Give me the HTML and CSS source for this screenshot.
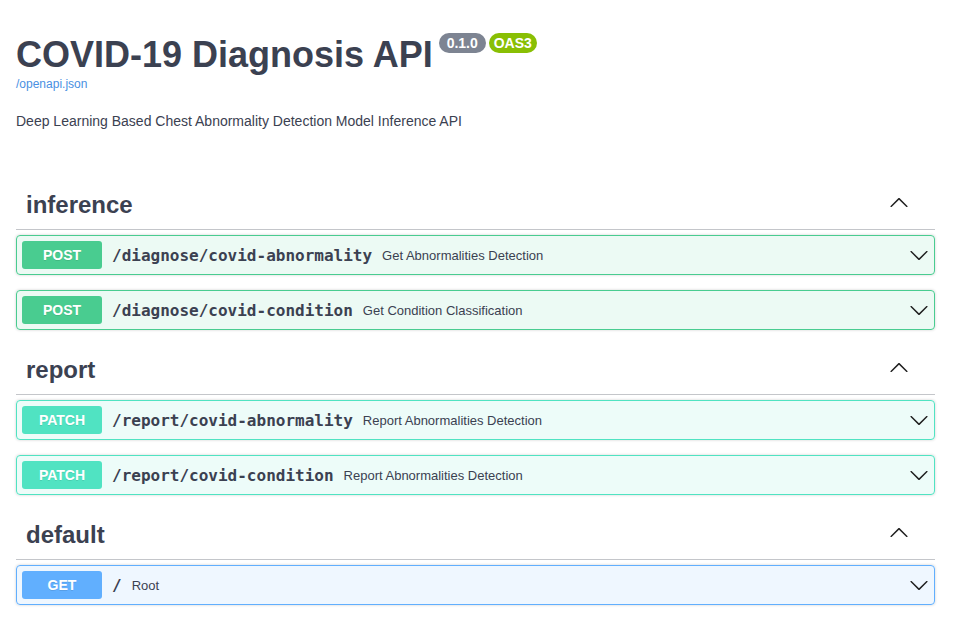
FILE: index.html
```html
<!DOCTYPE html>
<html lang="en">
<head>
<meta charset="utf-8">
<title>COVID-19 Diagnosis API</title>
<link rel="stylesheet" href="styles.css">
</head>
<body>
<div class="wrapper">
  <div class="info">
    <h2 class="title"><span>COVID-19 Diagnosis API</span><small class="badge badge-version"> 0.1.0 </small><small class="badge badge-oas">OAS3</small></h2>
    <a class="url" href="#">/openapi.json</a>
    <p class="description">Deep Learning Based Chest Abnormality Detection Model Inference API</p>
  </div>

  <section class="tag-section">
    <h3 class="tag"><span class="tag-name">inference</span>
      <svg class="arrow-up" width="20" height="20" viewBox="0 0 20 20"><path d="M17.418 13.891c.272.268.709.268.979 0s.271-.701 0-.969l-7.908-7.83c-.27-.268-.707-.268-.979 0l-7.908 7.83c-.27.268-.27.701 0 .969.271.268.709.268.979 0L10 6.75l7.418 7.141z"/></svg>
    </h3>
    <div class="opblock opblock-post">
      <span class="method">POST</span>
      <span class="path">/diagnose/covid-abnormality</span>
      <span class="desc">Get Abnormalities Detection</span>
      <svg class="arrow-down" width="20" height="20" viewBox="0 0 20 20"><path d="M17.418 6.109c.272-.268.709-.268.979 0s.271.701 0 .969l-7.908 7.83c-.27.268-.707.268-.979 0l-7.908-7.83c-.27-.268-.27-.701 0-.969.271-.268.709-.268.979 0L10 13.25l7.418-7.141z"/></svg>
    </div>
    <div class="opblock opblock-post">
      <span class="method">POST</span>
      <span class="path">/diagnose/covid-condition</span>
      <span class="desc">Get Condition Classification</span>
      <svg class="arrow-down" width="20" height="20" viewBox="0 0 20 20"><path d="M17.418 6.109c.272-.268.709-.268.979 0s.271.701 0 .969l-7.908 7.83c-.27.268-.707.268-.979 0l-7.908-7.83c-.27-.268-.27-.701 0-.969.271-.268.709-.268.979 0L10 13.25l7.418-7.141z"/></svg>
    </div>
  </section>

  <section class="tag-section">
    <h3 class="tag"><span class="tag-name">report</span>
      <svg class="arrow-up" width="20" height="20" viewBox="0 0 20 20"><path d="M17.418 13.891c.272.268.709.268.979 0s.271-.701 0-.969l-7.908-7.83c-.27-.268-.707-.268-.979 0l-7.908 7.83c-.27.268-.27.701 0 .969.271.268.709.268.979 0L10 6.75l7.418 7.141z"/></svg>
    </h3>
    <div class="opblock opblock-patch">
      <span class="method">PATCH</span>
      <span class="path">/report/covid-abnormality</span>
      <span class="desc">Report Abnormalities Detection</span>
      <svg class="arrow-down" width="20" height="20" viewBox="0 0 20 20"><path d="M17.418 6.109c.272-.268.709-.268.979 0s.271.701 0 .969l-7.908 7.83c-.27.268-.707.268-.979 0l-7.908-7.83c-.27-.268-.27-.701 0-.969.271-.268.709-.268.979 0L10 13.25l7.418-7.141z"/></svg>
    </div>
    <div class="opblock opblock-patch">
      <span class="method">PATCH</span>
      <span class="path">/report/covid-condition</span>
      <span class="desc">Report Abnormalities Detection</span>
      <svg class="arrow-down" width="20" height="20" viewBox="0 0 20 20"><path d="M17.418 6.109c.272-.268.709-.268.979 0s.271.701 0 .969l-7.908 7.83c-.27.268-.707.268-.979 0l-7.908-7.83c-.27-.268-.27-.701 0-.969.271-.268.709-.268.979 0L10 13.25l7.418-7.141z"/></svg>
    </div>
  </section>

  <section class="tag-section">
    <h3 class="tag"><span class="tag-name">default</span>
      <svg class="arrow-up" width="20" height="20" viewBox="0 0 20 20"><path d="M17.418 13.891c.272.268.709.268.979 0s.271-.701 0-.969l-7.908-7.83c-.27-.268-.707-.268-.979 0l-7.908 7.83c-.27.268-.27.701 0 .969.271.268.709.268.979 0L10 6.75l7.418 7.141z"/></svg>
    </h3>
    <div class="opblock opblock-get">
      <span class="method">GET</span>
      <span class="path">/</span>
      <span class="desc">Root</span>
      <svg class="arrow-down" width="20" height="20" viewBox="0 0 20 20"><path d="M17.418 6.109c.272-.268.709-.268.979 0s.271.701 0 .969l-7.908 7.83c-.27.268-.707.268-.979 0l-7.908-7.83c-.27-.268-.27-.701 0-.969.271-.268.709-.268.979 0L10 13.25l7.418-7.141z"/></svg>
    </div>
  </section>
</div>
</body>
</html>
```

FILE: styles.css
```css
html, body {
  margin: 0;
  padding: 0;
  background: #fff;
}

body {
  font-family: "Liberation Sans", Arial, sans-serif;
  color: #3b4151;
}

.wrapper {
  padding: 34px 18px 0 16px;
}

.info {
  margin-bottom: 51px;
}

.title {
  display: flex;
  align-items: flex-start;
  margin: 0;
  font-size: 36px;
  line-height: 41px;
  font-weight: 700;
  color: #3b4151;
}

.badge {
  display: inline-block;
  margin-top: -1px;
  padding: 2px 4px;
  border-radius: 57px;
  font-size: 14px;
  line-height: 16px;
  font-weight: 700;
  color: #fff;
  white-space: pre;
}

.badge-version {
  margin-left: 6px;
  background: #7d8492;
}

.badge-oas {
  margin-left: 3px;
  padding: 2px 5px;
  background: #89bf04;
}

.url {
  display: block;
  margin-top: 2px;
  font-size: 12px;
  line-height: 14px;
  color: #4990e2;
  text-decoration: none;
}

.description {
  margin: 22px 0 0;
  font-size: 14px;
  line-height: 16px;
  color: #3b4151;
}

.tag {
  display: flex;
  align-items: center;
  margin: 0 0 5px;
  padding: 10px 20px 10px 10px;
  border-bottom: 1px solid rgba(59, 65, 81, 0.3);
  font-size: 24px;
  line-height: 29px;
  font-weight: 700;
  color: #3b4151;
}

.tag-name {
  flex: 1;
}

.arrow-up {
  margin: 0 6px 4px 0;
  fill: #1f1f1f;
}

.opblock {
  display: flex;
  align-items: center;
  margin: 0 0 15px;
  padding: 5px;
  border: 1px solid #000;
  border-radius: 4px;
  box-shadow: 0 0 3px rgba(0, 0, 0, 0.19);
}

.method {
  min-width: 80px;
  padding: 6px 0;
  border-radius: 3px;
  font-size: 14px;
  line-height: 16px;
  font-weight: 700;
  text-align: center;
  color: #fff;
  text-shadow: 0 1px 0 rgba(0, 0, 0, 0.1);
}

.path {
  padding: 0 10px;
  font-family: "DejaVu Sans Mono", monospace;
  font-size: 16px;
  font-weight: 600;
  color: #3b4151;
}

.desc {
  flex: 1;
  font-size: 13px;
  color: #3b4151;
}

.arrow-down {
  flex: none;
  fill: #1f1f1f;
}

.opblock-post {
  background: rgba(73, 204, 144, 0.1);
  border-color: #49cc90;
}

.opblock-post .method {
  background: #49cc90;
}

.opblock-patch {
  background: rgba(80, 227, 194, 0.1);
  border-color: #50e3c2;
}

.opblock-patch .method {
  background: #50e3c2;
}

.opblock-get {
  background: rgba(97, 175, 254, 0.1);
  border-color: #61affe;
}

.opblock-get .method {
  background: #61affe;
}
```
